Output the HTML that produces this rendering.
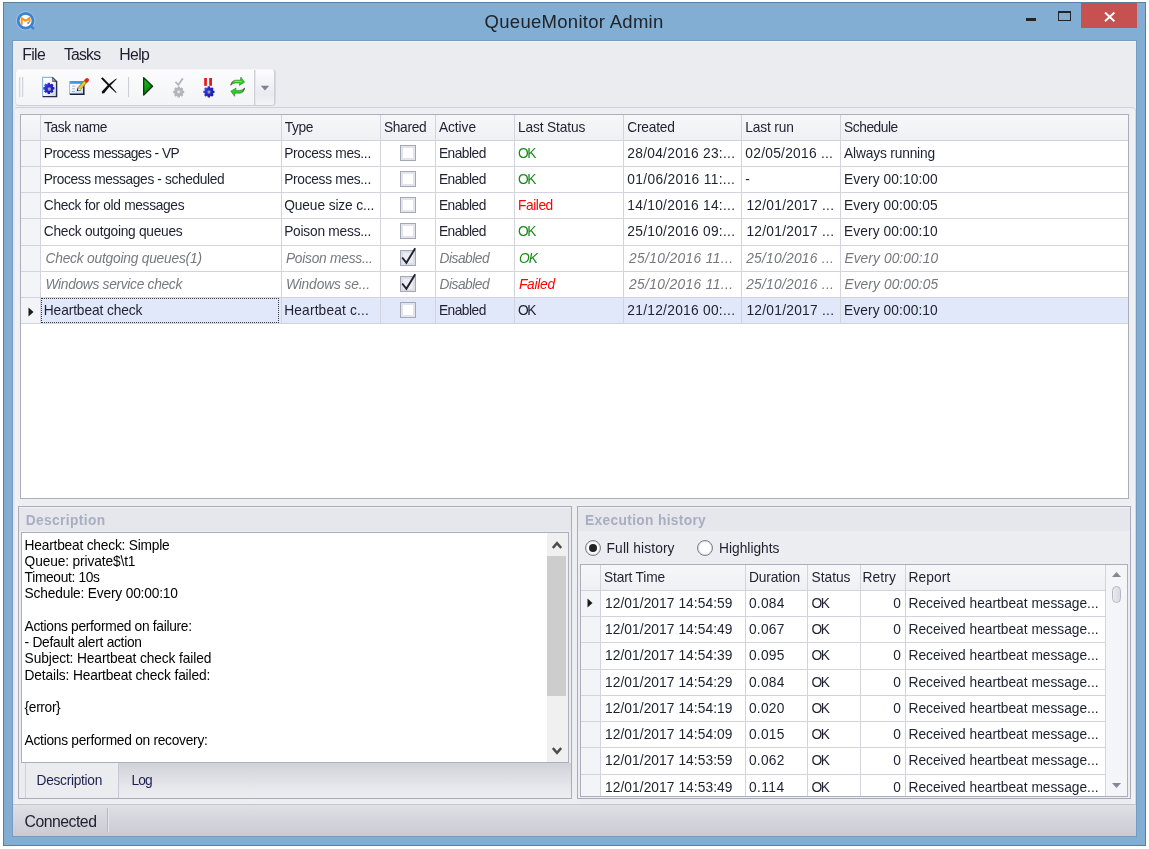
<!DOCTYPE html>
<html><head><meta charset="utf-8"><title>QueueMonitor Admin</title>
<style>

html,body{margin:0;padding:0;}
body{filter:blur(0.5px);width:1149px;height:849px;position:relative;overflow:hidden;background:#fff;font-family:"Liberation Sans",sans-serif;}
div,span.t,svg{position:absolute;box-sizing:border-box;}
span.t{white-space:pre;display:block;}
.vl{width:1px;background:#d9dae3;}
.hl{height:1px;background:#d9dae3;}

</style></head>
<body>
<div style="left:3px;top:2px;width:1143px;height:844px;background:#83aed4;border:1px solid #587fa4;"></div>
<div style="left:12px;top:40px;width:1125px;height:797px;background:#ebecf0;border:1px solid #779bbf;"></div>
<div style="left:13px;top:41px;width:1123px;height:1px;background:#f2f3f5;"></div>
<div style="left:1081px;top:3px;width:56px;height:25px;background:#c75050;"></div>
<svg style="left:1101px;top:9px" width="18" height="16" viewBox="0 0 18 16"><path d="M4 3.5 L13.4 12.2 M13.4 3.5 L4 12.2" stroke="#fff" stroke-width="1.9" fill="none"/></svg>
<div style="left:1058px;top:11px;width:13px;height:10px;border:1px solid #20242c;border-top-width:2px;"></div>
<div style="left:1026px;top:18px;width:10px;height:3px;background:#20242c;"></div>
<span class="t" style="top:10px;height:24px;line-height:24px;font-size:18.5px;color:#20242a;left:484.6px;letter-spacing:0.29px;">QueueMonitor Admin</span>
<svg style="left:14px;top:9px" width="24" height="24" viewBox="14 9 24 24">
<circle cx="25.6" cy="20.8" r="9.7" fill="#b4d0ee" opacity="0.6"/>
<path d="M31.4 26.6 L33.2 28.2" stroke="#3b84cf" stroke-width="2.6" stroke-linecap="round"/>
<circle cx="25.6" cy="20.8" r="7.4" fill="#fff" stroke="#3b84cf" stroke-width="2.8"/>
<path d="M21.7 24 L21.7 18.2 L25.6 20.8 L29.5 18.2 L29.5 21.6" stroke="#f8981f" stroke-width="2.1" fill="none" stroke-linejoin="round" stroke-linecap="round"/>
<circle cx="28.2" cy="23" r="1.1" fill="#5b9bd8"/>
</svg>
<span class="t" style="top:41.4px;height:28px;line-height:28px;font-size:15.8px;color:#1e1e2e;left:22.3px;letter-spacing:-0.67px;">File</span>
<span class="t" style="top:41.4px;height:28px;line-height:28px;font-size:15.8px;color:#1e1e2e;left:63.9px;letter-spacing:-0.8px;">Tasks</span>
<span class="t" style="top:41.4px;height:28px;line-height:28px;font-size:15.8px;color:#1e1e2e;left:119.2px;letter-spacing:-0.62px;">Help</span>
<div style="left:15px;top:69px;width:260px;height:37px;background:linear-gradient(#fcfcfd,#f3f4f6);border:1px solid #cdcfd7;border-top-color:#f4f5f7;border-left-color:#e2e3e8;border-radius:4px;box-shadow:1px 0 0 rgba(150,152,165,0.22);"></div>
<div style="left:256px;top:70px;width:18px;height:35px;background:linear-gradient(#fdfdfe,#e9eaef 70%,#f3f4f6);border-radius:0 3px 3px 0;"></div>
<div style="left:254px;top:70px;width:1px;height:35px;background:#cdcfd7;"></div>
<div style="left:255px;top:70px;width:1px;height:35px;background:#e6e7ec;"></div>
<div style="left:19px;top:77px;width:1px;height:20px;background:#d3d5dc;"></div>
<div style="left:20px;top:77px;width:1px;height:20px;background:#ecedf1;"></div>
<div style="left:22px;top:77px;width:1px;height:20px;background:#d3d5dc;"></div>
<div style="left:23px;top:77px;width:1px;height:20px;background:#ecedf1;"></div>
<div style="left:128px;top:77px;width:1px;height:20px;background:#cdcfd7;"></div>
<div style="left:129px;top:77px;width:1px;height:20px;background:#f4f5f7;"></div>
<svg style="left:260px;top:85px" width="10" height="6" viewBox="0 0 10 6"><path d="M0.8 0.8 L9.2 0.8 L5 5.4 Z" fill="#7f8191"/></svg>
<svg style="left:36px;top:72px" width="216" height="30" viewBox="36 72 216 30">
<defs>
<linearGradient id="gp" x1="0" y1="0" x2="1" y2="1"><stop offset="0.45" stop-color="#fff"/><stop offset="1" stop-color="#b9cfe6"/></linearGradient>
<linearGradient id="gw" x1="0" y1="0" x2="1" y2="1"><stop offset="0.3" stop-color="#fff"/><stop offset="1" stop-color="#bcd6f4"/></linearGradient>
<linearGradient id="gg" x1="0" y1="0" x2="0.6" y2="1"><stop offset="0" stop-color="#12d012"/><stop offset="0.5" stop-color="#0ca80c"/><stop offset="1" stop-color="#075a07"/></linearGradient>
<linearGradient id="gb" x1="0" y1="0" x2="1" y2="0.6"><stop offset="0" stop-color="#5a6ee4"/><stop offset="0.45" stop-color="#2a2ad0"/><stop offset="1" stop-color="#1a1aae"/></linearGradient>
<linearGradient id="gf" x1="0" y1="0" x2="1" y2="1"><stop offset="0" stop-color="#d8d8e0"/><stop offset="1" stop-color="#3a3c58"/></linearGradient>
</defs>
<!-- new doc -->
<path d="M42.6 77.4 L52.4 77.4 L56.6 81.6 L56.6 96.6 L42.6 96.6 Z" fill="url(#gp)"/>
<path d="M42.6 96.6 L42.6 77.4 L52.4 77.4" fill="none" stroke="#8fb6dc" stroke-width="1.2"/>
<path d="M52.4 77.4 L56.6 81.6 L56.6 96.6 L42.6 96.6" fill="none" stroke="#262a4e" stroke-width="1.4"/>
<path d="M52.4 77.4 L52.4 81.6 L56.6 81.6 Z" fill="url(#gf)" stroke="#3a3c58" stroke-width="0.6"/>
<path d="M54.39 87.17 L54.39 89.43 L52.96 89.74 L52.76 90.22 L53.55 91.45 L51.95 93.05 L50.72 92.26 L50.24 92.46 L49.93 93.89 L47.67 93.89 L47.36 92.46 L46.88 92.26 L45.65 93.05 L44.05 91.45 L44.84 90.22 L44.64 89.74 L43.21 89.43 L43.21 87.17 L44.64 86.86 L44.84 86.38 L44.05 85.15 L45.65 83.55 L46.88 84.34 L47.36 84.14 L47.67 82.71 L49.93 82.71 L50.24 84.14 L50.72 84.34 L51.95 83.55 L53.55 85.15 L52.76 86.38 L52.96 86.86 Z" fill="url(#gb)"/>
<rect x="47.8" y="87.5" width="3" height="3" rx="0.6" fill="#a9a9c4"/>
<!-- edit -->
<rect x="69.6" y="81" width="14.2" height="13.3" fill="url(#gw)"/>
<rect x="69.6" y="81" width="14.2" height="2.8" fill="#3b98ea"/>
<path d="M69.6 94.3 L69.6 81" stroke="#9cc2ee" stroke-width="1.1" fill="none"/>
<path d="M83.8 83.5 L83.8 94.3 L69.8 94.3" stroke="#1c1d40" stroke-width="1.5" fill="none"/>
<path d="M72 86.2 L75.4 86.2 M72 88.8 L74.8 88.8" stroke="#a9aeb8" stroke-width="0.9"/>
<path d="M72 91.6 L75 91.6" stroke="#6cc0c8" stroke-width="0.9"/>
<path d="M76.8 91.3 L77.6 87.6 L81 90.2 Z" fill="#1a1a22"/>
<path d="M78.6 87.6 L81.2 89.8 L78 90.6 Z" fill="#f4f0e4"/>
<path d="M86.2 80.8 L79.4 88.6" stroke="#8e7a1c" stroke-width="3.8"/>
<path d="M86.2 80.8 L79.4 88.6" stroke="#e2cb3e" stroke-width="2.5"/>
<path d="M87 80.1 L86.4 80.8" stroke="#e22a18" stroke-width="4" stroke-linecap="round"/>
<!-- delete X -->
<path d="M101 78.4 L102.6 77.2 L109.6 84.4 L116.6 92.4 L116 93 L108.4 86 Z" fill="#111"/>
<path d="M116.2 78.4 L116.8 79 L110 86 L104.2 93.2 L102 93.4 L101.8 91.4 L108.4 84.6 Z" fill="#111"/>
<!-- play -->
<path d="M143.7 77.8 L152.6 86.3 L143.7 95.1 Z" fill="url(#gg)" stroke="#0a3c0a" stroke-width="1.4" stroke-linejoin="round"/>
<!-- disabled check gear -->
<path d="M184.19 90.89 L184.19 93.11 L182.76 93.41 L182.57 93.88 L183.37 95.09 L181.79 96.67 L180.58 95.87 L180.11 96.06 L179.81 97.49 L177.59 97.49 L177.29 96.06 L176.82 95.87 L175.61 96.67 L174.03 95.09 L174.83 93.88 L174.64 93.41 L173.21 93.11 L173.21 90.89 L174.64 90.59 L174.83 90.12 L174.03 88.91 L175.61 87.33 L176.82 88.13 L177.29 87.94 L177.59 86.51 L179.81 86.51 L180.11 87.94 L180.58 88.13 L181.79 87.33 L183.37 88.91 L182.57 90.12 L182.76 90.59 Z" fill="#b3b4ba"/>
<circle cx="178.7" cy="91.8" r="1.6" fill="#e4e4e8"/>
<path d="M175.4 81.8 L178.4 84.8 L182.8 78.4" stroke="#b6b7bd" stroke-width="1.9" fill="none"/>
<!-- pause gear -->
<rect x="204.2" y="78" width="2.7" height="7.8" fill="#e31b1b"/>
<rect x="209.2" y="78" width="2.8" height="7.8" fill="#e31b1b"/>
<path d="M214.49 90.77 L214.49 93.03 L213.06 93.34 L212.86 93.82 L213.65 95.05 L212.05 96.65 L210.82 95.86 L210.34 96.06 L210.03 97.49 L207.77 97.49 L207.46 96.06 L206.98 95.86 L205.75 96.65 L204.15 95.05 L204.94 93.82 L204.74 93.34 L203.31 93.03 L203.31 90.77 L204.74 90.46 L204.94 89.98 L204.15 88.75 L205.75 87.15 L206.98 87.94 L207.46 87.74 L207.77 86.31 L210.03 86.31 L210.34 87.74 L210.82 87.94 L212.05 87.15 L213.65 88.75 L212.86 89.98 L213.06 90.46 Z" fill="url(#gb)"/>
<rect x="207.6" y="90.6" width="2.8" height="3" rx="0.6" fill="#9c9cb0"/>
<!-- refresh -->
<path d="M230.8 85.3 Q231.6 80.6 235.4 80.2 L240.5 80.2 L240.8 77.1 L244.6 82.2 L239.3 85.4 L239.8 83 L235.6 83 Q232.6 83.2 230.8 85.3 Z" fill="#1fd61f" stroke="#35603a" stroke-width="0.7" stroke-opacity="0.75"/>
<path d="M234.4 81.5 L241.6 81.5" stroke="#84f23a" stroke-width="0.9"/>
<path d="M231 85.1 Q231.6 82.6 233 81.6" stroke="#5a5f5e" stroke-width="1" fill="none"/>
<path d="M244.6 88.1 Q243.8 92.8 240 93.2 L234.9 93.2 L234.6 96.3 L230.8 91.2 L236.1 88 L235.6 90.4 L239.8 90.4 Q242.8 90.2 244.6 88.1 Z" fill="#1fd61f" stroke="#35603a" stroke-width="0.7" stroke-opacity="0.75"/>
<path d="M244.4 88.3 Q243.8 90.8 242.4 91.8" stroke="#5a4a46" stroke-width="1" fill="none"/>
</svg>
<div style="left:14px;top:107px;width:1122px;height:697px;background:linear-gradient(90deg,#f1f2f5,#edeef1 6px,#edeef1 1114px,#f1f2f5);border:1px solid #cfd1d9;border-left-color:#e3e4ea;border-right-color:#d6d8df;border-bottom:none;border-radius:4px 4px 0 0;"></div>
<div style="left:20px;top:114px;width:1109px;height:385px;background:#fff;border:1px solid #abaebb;"></div>
<div style="left:21px;top:115px;width:1107px;height:25px;background:linear-gradient(#f6f7f9,#eff0f3);"></div>
<div style="left:21px;top:140px;width:1107px;height:1px;background:#d0d2db;"></div>
<div style="left:21px;top:298px;width:1107px;height:25px;background:#e1e8fa;"></div>
<div style="left:21px;top:298px;width:20px;height:25px;background:#f3f4f7;"></div>
<div style="left:21px;top:166px;width:1107px;height:1px;background:#d2d3dd;"></div>
<div style="left:21px;top:192px;width:1107px;height:1px;background:#d2d3dd;"></div>
<div style="left:21px;top:218px;width:1107px;height:1px;background:#d2d3dd;"></div>
<div style="left:21px;top:245px;width:1107px;height:1px;background:#d2d3dd;"></div>
<div style="left:21px;top:271px;width:1107px;height:1px;background:#d2d3dd;"></div>
<div style="left:21px;top:297px;width:1107px;height:1px;background:#d2d3dd;"></div>
<div style="left:21px;top:323px;width:1107px;height:1px;background:#d2d3dd;"></div>
<div style="left:40px;top:115px;width:1px;height:209px;background:#d2d3dd;"></div>
<div style="left:281px;top:115px;width:1px;height:209px;background:#d2d3dd;"></div>
<div style="left:380px;top:115px;width:1px;height:209px;background:#d2d3dd;"></div>
<div style="left:435px;top:115px;width:1px;height:209px;background:#d2d3dd;"></div>
<div style="left:514px;top:115px;width:1px;height:209px;background:#d2d3dd;"></div>
<div style="left:623px;top:115px;width:1px;height:209px;background:#d2d3dd;"></div>
<div style="left:741px;top:115px;width:1px;height:209px;background:#d2d3dd;"></div>
<div style="left:840px;top:115px;width:1px;height:209px;background:#d2d3dd;"></div>
<div style="left:21px;top:141px;width:19px;height:182px;background:#f3f4f7;"></div>
<div style="left:21px;top:166px;width:20px;height:1px;background:#d2d3dd;"></div>
<div style="left:21px;top:192px;width:20px;height:1px;background:#d2d3dd;"></div>
<div style="left:21px;top:218px;width:20px;height:1px;background:#d2d3dd;"></div>
<div style="left:21px;top:245px;width:20px;height:1px;background:#d2d3dd;"></div>
<div style="left:21px;top:271px;width:20px;height:1px;background:#d2d3dd;"></div>
<div style="left:21px;top:297px;width:20px;height:1px;background:#d2d3dd;"></div>
<div style="left:21px;top:323px;width:20px;height:1px;background:#d2d3dd;"></div>
<div style="left:41px;top:298px;width:238px;height:25px;border:1px dotted #3a3a3a;"></div>
<svg style="left:28px;top:306.5px" width="6" height="10" viewBox="0 0 6 10"><path d="M0.5 0.5 L5.5 5 L0.5 9.5 Z" fill="#1a1a1a"/></svg>
<span class="t" style="top:115px;height:25px;line-height:25px;font-size:13.75px;color:#1f2030;left:44.1px;letter-spacing:-0.39px;">Task name</span>
<span class="t" style="top:115px;height:25px;line-height:25px;font-size:13.75px;color:#1f2030;left:284.8px;letter-spacing:-0.4px;">Type</span>
<span class="t" style="top:115px;height:25px;line-height:25px;font-size:13.75px;color:#1f2030;left:383.9px;letter-spacing:-0.32px;">Shared</span>
<span class="t" style="top:115px;height:25px;line-height:25px;font-size:13.75px;color:#1f2030;left:438.9px;letter-spacing:-0.06px;">Active</span>
<span class="t" style="top:115px;height:25px;line-height:25px;font-size:13.75px;color:#1f2030;left:518px;letter-spacing:-0.15px;">Last Status</span>
<span class="t" style="top:115px;height:25px;line-height:25px;font-size:13.75px;color:#1f2030;left:627.3px;letter-spacing:-0.23px;">Created</span>
<span class="t" style="top:115px;height:25px;line-height:25px;font-size:13.75px;color:#1f2030;left:745.3px;letter-spacing:-0.15px;">Last run</span>
<span class="t" style="top:115px;height:25px;line-height:25px;font-size:13.75px;color:#1f2030;left:844.1px;letter-spacing:-0.46px;">Schedule</span>
<span class="t" style="top:141px;height:25px;line-height:25px;font-size:13.75px;color:#1f2030;left:43.8px;letter-spacing:-0.54px;">Process messages - VP</span>
<span class="t" style="top:141px;height:25px;line-height:25px;font-size:13.75px;color:#1f2030;left:284.2px;letter-spacing:-0.3px;">Process mes...</span>
<div style="left:400px;top:145px;width:16px;height:16px;background:#fff;border:1px solid #a4a7b6;box-shadow:inset 0 0 0 2px #e4e5ec;"></div>
<span class="t" style="top:141px;height:25px;line-height:25px;font-size:13.75px;color:#1f2030;left:438.9px;letter-spacing:-0.5px;">Enabled</span>
<span class="t" style="top:141px;height:25px;line-height:25px;font-size:13.75px;color:#1c8a1c;left:518px;letter-spacing:-1.49px;">OK</span>
<span class="t" style="top:141px;height:25px;line-height:25px;font-size:13.75px;color:#1f2030;left:627.3px;letter-spacing:0.28px;">28/04/2016 23:...</span>
<span class="t" style="top:141px;height:25px;line-height:25px;font-size:13.75px;color:#1f2030;left:745.3px;letter-spacing:0.27px;">02/05/2016 ...</span>
<span class="t" style="top:141px;height:25px;line-height:25px;font-size:13.75px;color:#1f2030;left:844.1px;letter-spacing:-0.17px;">Always running</span>
<span class="t" style="top:167px;height:25px;line-height:25px;font-size:13.75px;color:#1f2030;left:43.8px;letter-spacing:-0.38px;">Process messages - scheduled</span>
<span class="t" style="top:167px;height:25px;line-height:25px;font-size:13.75px;color:#1f2030;left:284.2px;letter-spacing:-0.3px;">Process mes...</span>
<div style="left:400px;top:171px;width:16px;height:16px;background:#fff;border:1px solid #a4a7b6;box-shadow:inset 0 0 0 2px #e4e5ec;"></div>
<span class="t" style="top:167px;height:25px;line-height:25px;font-size:13.75px;color:#1f2030;left:438.9px;letter-spacing:-0.5px;">Enabled</span>
<span class="t" style="top:167px;height:25px;line-height:25px;font-size:13.75px;color:#1c8a1c;left:518px;letter-spacing:-1.49px;">OK</span>
<span class="t" style="top:167px;height:25px;line-height:25px;font-size:13.75px;color:#1f2030;left:627.3px;letter-spacing:0.34px;">01/06/2016 11:...</span>
<span class="t" style="top:167px;height:25px;line-height:25px;font-size:13.75px;color:#1f2030;left:745.3px;letter-spacing:-0.09px;">-</span>
<span class="t" style="top:167px;height:25px;line-height:25px;font-size:13.75px;color:#1f2030;left:844.1px;letter-spacing:0.09px;">Every 00:10:00</span>
<span class="t" style="top:193px;height:25px;line-height:25px;font-size:13.75px;color:#1f2030;left:43.8px;letter-spacing:-0.32px;">Check for old messages</span>
<span class="t" style="top:193px;height:25px;line-height:25px;font-size:13.75px;color:#1f2030;left:284.2px;letter-spacing:-0.11px;">Queue size c...</span>
<div style="left:400px;top:197px;width:16px;height:16px;background:#fff;border:1px solid #a4a7b6;box-shadow:inset 0 0 0 2px #e4e5ec;"></div>
<span class="t" style="top:193px;height:25px;line-height:25px;font-size:13.75px;color:#1f2030;left:438.9px;letter-spacing:-0.5px;">Enabled</span>
<span class="t" style="top:193px;height:25px;line-height:25px;font-size:13.75px;color:#ff0000;left:518px;letter-spacing:-0.44px;">Failed</span>
<span class="t" style="top:193px;height:25px;line-height:25px;font-size:13.75px;color:#1f2030;left:627.3px;letter-spacing:0.28px;">14/10/2016 14:...</span>
<span class="t" style="top:193px;height:25px;line-height:25px;font-size:13.75px;color:#1f2030;left:746.4px;letter-spacing:0.27px;">12/01/2017 ...</span>
<span class="t" style="top:193px;height:25px;line-height:25px;font-size:13.75px;color:#1f2030;left:844.1px;letter-spacing:0.09px;">Every 00:00:05</span>
<span class="t" style="top:219px;height:26px;line-height:26px;font-size:13.75px;color:#1f2030;left:43.8px;letter-spacing:-0.28px;">Check outgoing queues</span>
<span class="t" style="top:219px;height:26px;line-height:26px;font-size:13.75px;color:#1f2030;left:284.2px;letter-spacing:-0.24px;">Poison mess...</span>
<div style="left:400px;top:223px;width:16px;height:16px;background:#fff;border:1px solid #a4a7b6;box-shadow:inset 0 0 0 2px #e4e5ec;"></div>
<span class="t" style="top:219px;height:26px;line-height:26px;font-size:13.75px;color:#1f2030;left:438.9px;letter-spacing:-0.5px;">Enabled</span>
<span class="t" style="top:219px;height:26px;line-height:26px;font-size:13.75px;color:#1c8a1c;left:518px;letter-spacing:-1.49px;">OK</span>
<span class="t" style="top:219px;height:26px;line-height:26px;font-size:13.75px;color:#1f2030;left:627.3px;letter-spacing:0.28px;">25/10/2016 09:...</span>
<span class="t" style="top:219px;height:26px;line-height:26px;font-size:13.75px;color:#1f2030;left:746.4px;letter-spacing:0.27px;">12/01/2017 ...</span>
<span class="t" style="top:219px;height:26px;line-height:26px;font-size:13.75px;color:#1f2030;left:844.1px;letter-spacing:0.09px;">Every 00:00:10</span>
<span class="t" style="top:246px;height:25px;line-height:25px;font-size:13.75px;color:#77787f;left:45.5px;letter-spacing:-0.21px;font-style:italic;">Check outgoing queues(1)</span>
<span class="t" style="top:246px;height:25px;line-height:25px;font-size:13.75px;color:#77787f;left:285.9px;letter-spacing:-0.24px;font-style:italic;">Poison mess...</span>
<div style="left:400px;top:250px;width:16px;height:16px;background:#ecedf2;border:1px solid #a4a7b6;box-shadow:inset 0 0 0 2px #dcdde5;"></div>
<svg style="left:400px;top:247px" width="18" height="19" viewBox="0 0 18 19"><path d="M2.2 10.5 L6.4 15.8 L15.2 1.2" stroke="#1e2030" stroke-width="1.9" fill="none"/></svg>
<span class="t" style="top:246px;height:25px;line-height:25px;font-size:13.75px;color:#77787f;left:439.5px;letter-spacing:-0.48px;font-style:italic;">Disabled</span>
<span class="t" style="top:246px;height:25px;line-height:25px;font-size:13.75px;color:#1c8a1c;left:519px;letter-spacing:-0.99px;font-style:italic;">OK</span>
<span class="t" style="top:246px;height:25px;line-height:25px;font-size:13.75px;color:#77787f;left:629.0px;letter-spacing:0.38px;font-style:italic;">25/10/2016 11...</span>
<span class="t" style="top:246px;height:25px;line-height:25px;font-size:13.75px;color:#77787f;left:746.1999999999999px;letter-spacing:0.27px;font-style:italic;">25/10/2016 ...</span>
<span class="t" style="top:246px;height:25px;line-height:25px;font-size:13.75px;color:#77787f;left:844.4px;letter-spacing:0.09px;font-style:italic;">Every 00:00:10</span>
<span class="t" style="top:272px;height:25px;line-height:25px;font-size:13.75px;color:#77787f;left:45.5px;letter-spacing:-0.3px;font-style:italic;">Windows service check</span>
<span class="t" style="top:272px;height:25px;line-height:25px;font-size:13.75px;color:#77787f;left:285.9px;letter-spacing:-0.11px;font-style:italic;">Windows se...</span>
<div style="left:400px;top:276px;width:16px;height:16px;background:#ecedf2;border:1px solid #a4a7b6;box-shadow:inset 0 0 0 2px #dcdde5;"></div>
<svg style="left:400px;top:273px" width="18" height="19" viewBox="0 0 18 19"><path d="M2.2 10.5 L6.4 15.8 L15.2 1.2" stroke="#1e2030" stroke-width="1.9" fill="none"/></svg>
<span class="t" style="top:272px;height:25px;line-height:25px;font-size:13.75px;color:#77787f;left:439.5px;letter-spacing:-0.48px;font-style:italic;">Disabled</span>
<span class="t" style="top:272px;height:25px;line-height:25px;font-size:13.75px;color:#ff0000;left:519px;letter-spacing:-0.28px;font-style:italic;">Failed</span>
<span class="t" style="top:272px;height:25px;line-height:25px;font-size:13.75px;color:#77787f;left:629.0px;letter-spacing:0.38px;font-style:italic;">25/10/2016 11...</span>
<span class="t" style="top:272px;height:25px;line-height:25px;font-size:13.75px;color:#77787f;left:746.1999999999999px;letter-spacing:0.27px;font-style:italic;">25/10/2016 ...</span>
<span class="t" style="top:272px;height:25px;line-height:25px;font-size:13.75px;color:#77787f;left:844.4px;letter-spacing:0.09px;font-style:italic;">Every 00:00:05</span>
<span class="t" style="top:298px;height:25px;line-height:25px;font-size:13.75px;color:#1f2030;left:43.8px;letter-spacing:-0.11px;">Heartbeat check</span>
<span class="t" style="top:298px;height:25px;line-height:25px;font-size:13.75px;color:#1f2030;left:284.2px;letter-spacing:0.16px;">Heartbeat c...</span>
<div style="left:400px;top:302px;width:16px;height:16px;background:#fff;border:1px solid #a4a7b6;box-shadow:inset 0 0 0 2px #e4e5ec;"></div>
<span class="t" style="top:298px;height:25px;line-height:25px;font-size:13.75px;color:#1f2030;left:438.9px;letter-spacing:-0.5px;">Enabled</span>
<span class="t" style="top:298px;height:25px;line-height:25px;font-size:13.75px;color:#1f2030;left:518px;letter-spacing:-1.49px;">OK</span>
<span class="t" style="top:298px;height:25px;line-height:25px;font-size:13.75px;color:#1f2030;left:627.3px;letter-spacing:0.28px;">21/12/2016 00:...</span>
<span class="t" style="top:298px;height:25px;line-height:25px;font-size:13.75px;color:#1f2030;left:746.4px;letter-spacing:0.27px;">12/01/2017 ...</span>
<span class="t" style="top:298px;height:25px;line-height:25px;font-size:13.75px;color:#1f2030;left:844.1px;letter-spacing:0.09px;">Every 00:00:10</span>
<div style="left:18px;top:506px;width:554px;height:293px;background:#ecedf1;border:1px solid #a9acba;"></div>
<div style="left:19px;top:507px;width:552px;height:24px;background:#e6e7ec;border-top:1px solid #f0f1f4;"></div>
<span class="t" style="top:509px;height:24px;line-height:24px;font-size:13.75px;color:#a9adbf;left:25.8px;letter-spacing:0.36px;font-weight:bold;">Description</span>
<div style="left:577px;top:506px;width:554px;height:293px;background:#ecedf1;border:1px solid #a9acba;"></div>
<div style="left:578px;top:507px;width:552px;height:24px;background:#e6e7ec;border-top:1px solid #f0f1f4;"></div>
<span class="t" style="top:509px;height:24px;line-height:24px;font-size:13.75px;color:#a9adbf;left:585.1px;letter-spacing:0.33px;font-weight:bold;">Execution history</span>
<div style="left:21px;top:532px;width:548px;height:231px;background:#fff;border:1px solid #abaebb;"></div>
<span class="t" style="top:537.5px;height:16.25px;line-height:16.25px;font-size:13.75px;color:#000;left:24.6px;letter-spacing:-0.21px;">Heartbeat check: Simple</span>
<span class="t" style="top:553.75px;height:16.25px;line-height:16.25px;font-size:13.75px;color:#000;left:24.6px;letter-spacing:-0.13px;">Queue: private$\t1</span>
<span class="t" style="top:570.0px;height:16.25px;line-height:16.25px;font-size:13.75px;color:#000;left:24.6px;letter-spacing:-0.33px;">Timeout: 10s</span>
<span class="t" style="top:586.25px;height:16.25px;line-height:16.25px;font-size:13.75px;color:#000;left:24.6px;letter-spacing:-0.18px;">Schedule: Every 00:00:10</span>
<span class="t" style="top:618.75px;height:16.25px;line-height:16.25px;font-size:13.75px;color:#000;left:24.6px;letter-spacing:-0.3px;">Actions performed on failure:</span>
<span class="t" style="top:635.0px;height:16.25px;line-height:16.25px;font-size:13.75px;color:#000;left:24.6px;letter-spacing:-0.27px;">- Default alert action</span>
<span class="t" style="top:651.25px;height:16.25px;line-height:16.25px;font-size:13.75px;color:#000;left:24.6px;letter-spacing:-0.12px;">Subject: Heartbeat check failed</span>
<span class="t" style="top:667.5px;height:16.25px;line-height:16.25px;font-size:13.75px;color:#000;left:24.6px;letter-spacing:-0.15px;">Details: Heartbeat check failed:</span>
<span class="t" style="top:700.0px;height:16.25px;line-height:16.25px;font-size:13.75px;color:#000;left:24.6px;letter-spacing:-0.35px;">{error}</span>
<span class="t" style="top:732.5px;height:16.25px;line-height:16.25px;font-size:13.75px;color:#000;left:24.6px;letter-spacing:-0.27px;">Actions performed on recovery:</span>
<div style="left:547px;top:533px;width:21px;height:229px;background:#f0f0f0;"></div>
<div style="left:547px;top:556px;width:19px;height:140px;background:#cdcdcd;"></div>
<svg style="left:552px;top:541.3px" width="10" height="8" viewBox="0 0 10 8"><path d="M0.8 7 L5 2.2 L9.2 7" stroke="#4c4c4c" stroke-width="2.5" fill="none"/></svg>
<svg style="left:552px;top:747.2px" width="10" height="8" viewBox="0 0 10 8"><path d="M0.8 1 L5 5.8 L9.2 1" stroke="#4c4c4c" stroke-width="2.5" fill="none"/></svg>
<div style="left:19px;top:763px;width:552px;height:35px;background:#ebecf0;"></div>
<div style="left:119px;top:763px;width:452px;height:35px;background:linear-gradient(#d1d2d9,#dcdde3 35%,#e8e9ed 75%,#ecedf0);"></div>
<div style="left:25px;top:763px;width:94px;height:35px;background:#ebecf0;border-left:1px solid #cfd1d9;border-right:1px solid #c6c8d2;"></div>
<span class="t" style="top:764px;height:34px;line-height:34px;font-size:13.75px;color:#1e2050;left:36.5px;letter-spacing:-0.3px;">Description</span>
<span class="t" style="top:764px;height:34px;line-height:34px;font-size:13.75px;color:#1e2050;left:131.4px;letter-spacing:-0.78px;">Log</span>
<div style="left:584.5px;top:539.5px;width:16px;height:16px;border-radius:50%;background:#fff;border:1px solid #7d7f8c;box-shadow:inset 0 0 0 1px #dcdde3;"></div>
<div style="left:588.5px;top:543.5px;width:8px;height:8px;border-radius:50%;background:#222;"></div>
<div style="left:697px;top:539.5px;width:16px;height:16px;border-radius:50%;background:#fff;border:1px solid #7d7f8c;box-shadow:inset 0 0 0 1px #dcdde3;"></div>
<span class="t" style="top:536px;height:26px;line-height:26px;font-size:13.75px;color:#1f2030;left:606.6px;letter-spacing:0.13px;">Full history</span>
<span class="t" style="top:536px;height:26px;line-height:26px;font-size:13.75px;color:#1f2030;left:719px;letter-spacing:0.01px;">Highlights</span>
<div style="left:580px;top:564px;width:548px;height:233px;background:#fff;border:1px solid #abaebb;"></div>
<div style="left:581px;top:565px;width:546px;height:25px;background:linear-gradient(#f6f7f9,#eff0f3);"></div>
<div style="left:1105px;top:565px;width:22px;height:231px;background:#f4f5f8;border-left:1px solid #d2d3dd;"></div>
<div style="left:581px;top:590px;width:524px;height:1px;background:#d2d3dd;"></div>
<div style="left:581px;top:616px;width:524px;height:1px;background:#d2d3dd;"></div>
<div style="left:581px;top:642px;width:524px;height:1px;background:#d2d3dd;"></div>
<div style="left:581px;top:669px;width:524px;height:1px;background:#d2d3dd;"></div>
<div style="left:581px;top:695px;width:524px;height:1px;background:#d2d3dd;"></div>
<div style="left:581px;top:721px;width:524px;height:1px;background:#d2d3dd;"></div>
<div style="left:581px;top:747px;width:524px;height:1px;background:#d2d3dd;"></div>
<div style="left:581px;top:774px;width:524px;height:1px;background:#d2d3dd;"></div>
<div style="left:600px;top:565px;width:1px;height:231px;background:#d2d3dd;"></div>
<div style="left:745px;top:565px;width:1px;height:231px;background:#d2d3dd;"></div>
<div style="left:807px;top:565px;width:1px;height:231px;background:#d2d3dd;"></div>
<div style="left:860px;top:565px;width:1px;height:231px;background:#d2d3dd;"></div>
<div style="left:905px;top:565px;width:1px;height:231px;background:#d2d3dd;"></div>
<div style="left:581px;top:591px;width:20px;height:205px;background:#f3f4f7;border-right:1px solid #d2d3dd"></div>
<div style="left:581px;top:616px;width:20px;height:1px;background:#d2d3dd;"></div>
<div style="left:581px;top:642px;width:20px;height:1px;background:#d2d3dd;"></div>
<div style="left:581px;top:669px;width:20px;height:1px;background:#d2d3dd;"></div>
<div style="left:581px;top:695px;width:20px;height:1px;background:#d2d3dd;"></div>
<div style="left:581px;top:721px;width:20px;height:1px;background:#d2d3dd;"></div>
<div style="left:581px;top:747px;width:20px;height:1px;background:#d2d3dd;"></div>
<div style="left:581px;top:774px;width:20px;height:1px;background:#d2d3dd;"></div>
<span class="t" style="top:565px;height:25px;line-height:25px;font-size:13.75px;color:#1f2030;left:604px;letter-spacing:-0.17px;">Start Time</span>
<span class="t" style="top:565px;height:25px;line-height:25px;font-size:13.75px;color:#1f2030;left:749px;letter-spacing:-0.12px;">Duration</span>
<span class="t" style="top:565px;height:25px;line-height:25px;font-size:13.75px;color:#1f2030;left:811.5px;">Status</span>
<span class="t" style="top:565px;height:25px;line-height:25px;font-size:13.75px;color:#1f2030;left:862.5px;letter-spacing:0.13px;">Retry</span>
<span class="t" style="top:565px;height:25px;line-height:25px;font-size:13.75px;color:#1f2030;left:908.5px;letter-spacing:0.12px;">Report</span>
<span class="t" style="top:591px;height:25px;line-height:25px;font-size:13.75px;color:#1f2030;left:605px;letter-spacing:0.07px;">12/01/2017 14:54:59</span>
<span class="t" style="top:591px;height:25px;line-height:25px;font-size:13.75px;color:#1f2030;left:749px;letter-spacing:0.22px;">0.084</span>
<span class="t" style="top:591px;height:25px;line-height:25px;font-size:13.75px;color:#1f2030;left:811.5px;letter-spacing:-1.44px;">OK</span>
<span class="t" style="top:591px;height:25px;line-height:25px;font-size:13.75px;color:#1f2030;left:501px;width:400px;text-align:right;">0</span>
<span class="t" style="top:591px;height:25px;line-height:25px;font-size:13.75px;color:#1f2030;left:908.5px;letter-spacing:-0.01px;">Received heartbeat message...</span>
<span class="t" style="top:617px;height:25px;line-height:25px;font-size:13.75px;color:#1f2030;left:605px;letter-spacing:0.07px;">12/01/2017 14:54:49</span>
<span class="t" style="top:617px;height:25px;line-height:25px;font-size:13.75px;color:#1f2030;left:749px;letter-spacing:0.22px;">0.067</span>
<span class="t" style="top:617px;height:25px;line-height:25px;font-size:13.75px;color:#1f2030;left:811.5px;letter-spacing:-1.44px;">OK</span>
<span class="t" style="top:617px;height:25px;line-height:25px;font-size:13.75px;color:#1f2030;left:501px;width:400px;text-align:right;">0</span>
<span class="t" style="top:617px;height:25px;line-height:25px;font-size:13.75px;color:#1f2030;left:908.5px;letter-spacing:-0.01px;">Received heartbeat message...</span>
<span class="t" style="top:643px;height:26px;line-height:26px;font-size:13.75px;color:#1f2030;left:605px;letter-spacing:0.07px;">12/01/2017 14:54:39</span>
<span class="t" style="top:643px;height:26px;line-height:26px;font-size:13.75px;color:#1f2030;left:749px;letter-spacing:0.22px;">0.095</span>
<span class="t" style="top:643px;height:26px;line-height:26px;font-size:13.75px;color:#1f2030;left:811.5px;letter-spacing:-1.44px;">OK</span>
<span class="t" style="top:643px;height:26px;line-height:26px;font-size:13.75px;color:#1f2030;left:501px;width:400px;text-align:right;">0</span>
<span class="t" style="top:643px;height:26px;line-height:26px;font-size:13.75px;color:#1f2030;left:908.5px;letter-spacing:-0.01px;">Received heartbeat message...</span>
<span class="t" style="top:670px;height:25px;line-height:25px;font-size:13.75px;color:#1f2030;left:605px;letter-spacing:0.07px;">12/01/2017 14:54:29</span>
<span class="t" style="top:670px;height:25px;line-height:25px;font-size:13.75px;color:#1f2030;left:749px;letter-spacing:0.22px;">0.084</span>
<span class="t" style="top:670px;height:25px;line-height:25px;font-size:13.75px;color:#1f2030;left:811.5px;letter-spacing:-1.44px;">OK</span>
<span class="t" style="top:670px;height:25px;line-height:25px;font-size:13.75px;color:#1f2030;left:501px;width:400px;text-align:right;">0</span>
<span class="t" style="top:670px;height:25px;line-height:25px;font-size:13.75px;color:#1f2030;left:908.5px;letter-spacing:-0.01px;">Received heartbeat message...</span>
<span class="t" style="top:696px;height:25px;line-height:25px;font-size:13.75px;color:#1f2030;left:605px;letter-spacing:0.07px;">12/01/2017 14:54:19</span>
<span class="t" style="top:696px;height:25px;line-height:25px;font-size:13.75px;color:#1f2030;left:749px;letter-spacing:0.22px;">0.020</span>
<span class="t" style="top:696px;height:25px;line-height:25px;font-size:13.75px;color:#1f2030;left:811.5px;letter-spacing:-1.44px;">OK</span>
<span class="t" style="top:696px;height:25px;line-height:25px;font-size:13.75px;color:#1f2030;left:501px;width:400px;text-align:right;">0</span>
<span class="t" style="top:696px;height:25px;line-height:25px;font-size:13.75px;color:#1f2030;left:908.5px;letter-spacing:-0.01px;">Received heartbeat message...</span>
<span class="t" style="top:722px;height:25px;line-height:25px;font-size:13.75px;color:#1f2030;left:605px;letter-spacing:0.07px;">12/01/2017 14:54:09</span>
<span class="t" style="top:722px;height:25px;line-height:25px;font-size:13.75px;color:#1f2030;left:749px;letter-spacing:0.22px;">0.015</span>
<span class="t" style="top:722px;height:25px;line-height:25px;font-size:13.75px;color:#1f2030;left:811.5px;letter-spacing:-1.44px;">OK</span>
<span class="t" style="top:722px;height:25px;line-height:25px;font-size:13.75px;color:#1f2030;left:501px;width:400px;text-align:right;">0</span>
<span class="t" style="top:722px;height:25px;line-height:25px;font-size:13.75px;color:#1f2030;left:908.5px;letter-spacing:-0.01px;">Received heartbeat message...</span>
<span class="t" style="top:748px;height:26px;line-height:26px;font-size:13.75px;color:#1f2030;left:605px;letter-spacing:0.07px;">12/01/2017 14:53:59</span>
<span class="t" style="top:748px;height:26px;line-height:26px;font-size:13.75px;color:#1f2030;left:749px;letter-spacing:0.22px;">0.062</span>
<span class="t" style="top:748px;height:26px;line-height:26px;font-size:13.75px;color:#1f2030;left:811.5px;letter-spacing:-1.44px;">OK</span>
<span class="t" style="top:748px;height:26px;line-height:26px;font-size:13.75px;color:#1f2030;left:501px;width:400px;text-align:right;">0</span>
<span class="t" style="top:748px;height:26px;line-height:26px;font-size:13.75px;color:#1f2030;left:908.5px;letter-spacing:-0.01px;">Received heartbeat message...</span>
<span class="t" style="top:775px;height:25px;line-height:25px;font-size:13.75px;color:#1f2030;left:605px;letter-spacing:0.07px;">12/01/2017 14:53:49</span>
<span class="t" style="top:775px;height:25px;line-height:25px;font-size:13.75px;color:#1f2030;left:749px;letter-spacing:0.42px;">0.114</span>
<span class="t" style="top:775px;height:25px;line-height:25px;font-size:13.75px;color:#1f2030;left:811.5px;letter-spacing:-1.44px;">OK</span>
<span class="t" style="top:775px;height:25px;line-height:25px;font-size:13.75px;color:#1f2030;left:501px;width:400px;text-align:right;">0</span>
<span class="t" style="top:775px;height:25px;line-height:25px;font-size:13.75px;color:#1f2030;left:908.5px;letter-spacing:-0.01px;">Received heartbeat message...</span>
<div style="left:580px;top:796px;width:548px;height:1px;background:#abaebb;"></div>
<div style="left:580px;top:797px;width:548px;height:2px;background:#ecedf1;"></div>
<div style="left:577px;top:798px;width:554px;height:1px;background:#a9acba;"></div>
<div style="left:577px;top:799px;width:554px;height:6px;background:#ebecf0;"></div>
<svg style="left:587px;top:598px" width="6" height="10" viewBox="0 0 6 10"><path d="M0.5 0.5 L5.5 5 L0.5 9.5 Z" fill="#1a1a1a"/></svg>
<svg style="left:1112px;top:572px" width="9" height="5" viewBox="0 0 9 5"><path d="M0 5 L4.5 0 L9 5 Z" fill="#858796"/></svg>
<svg style="left:1112px;top:783px" width="9" height="5" viewBox="0 0 9 5"><path d="M0 0 L4.5 5 L9 0 Z" fill="#858796"/></svg>
<div style="left:1112px;top:586px;width:9px;height:17px;background:linear-gradient(90deg,#e9eaef,#d9dae1);border:1px solid #b6b8c4;border-radius:4.5px;"></div>
<div style="left:13px;top:804px;width:1123px;height:32px;background:linear-gradient(#dfe0e5,#c9cad3);border-top:1px solid #c4c5cf;"></div>
<span class="t" style="top:806.6px;height:30px;line-height:30px;font-size:15.8px;color:#1e1e2e;left:24.6px;letter-spacing:-0.51px;">Connected</span>
<div style="left:107px;top:808px;width:1px;height:24px;background:#b5b7c2;"></div>
<div style="left:108px;top:808px;width:1px;height:24px;background:#e6e7eb;"></div>
</body></html>
